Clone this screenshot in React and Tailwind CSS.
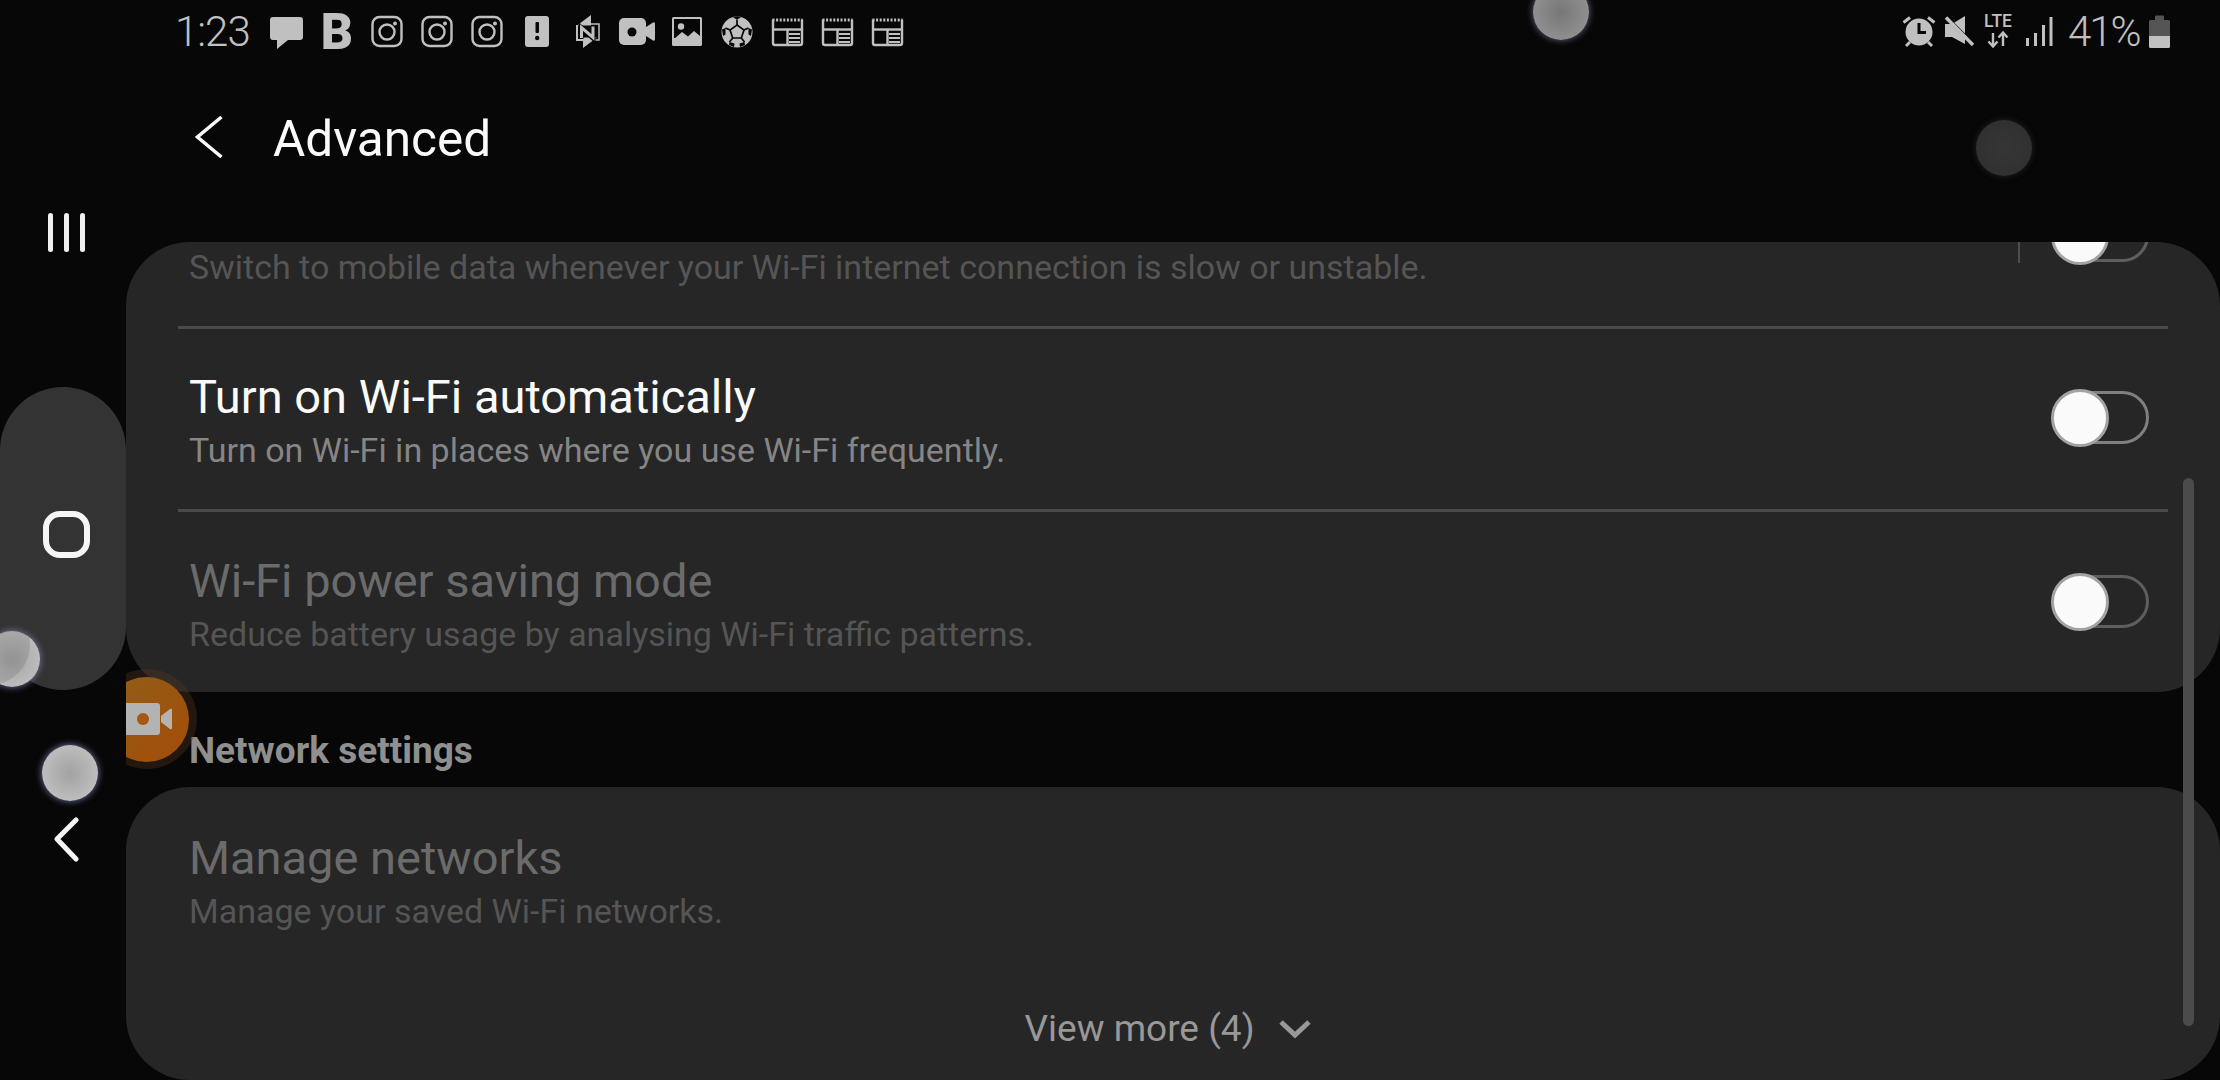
const ICON = "#c0c0c0";
const BG = "#070707";

const Cell = ({ children }) => (
  <svg width="50" height="50" viewBox="0 0 50 50" className="shrink-0">
    {children}
  </svg>
);

const MessageIcon = () => (
  <Cell>
    <path d="M11 10H38a3 3 0 0 1 3 3V30a3 3 0 0 1-3 3H26L15 42V33H11a3 3 0 0 1-3-3V13a3 3 0 0 1 3-3Z" fill={ICON} />
  </Cell>
);

const InstaIcon = () => (
  <Cell>
    <rect x="10.5" y="10" width="29" height="29" rx="7" fill="none" stroke={ICON} strokeWidth="2.4" />
    <circle cx="25" cy="25" r="7.5" fill="none" stroke={ICON} strokeWidth="2.4" />
    <circle cx="33" cy="16.5" r="2" fill={ICON} />
  </Cell>
);

const AlertIcon = () => (
  <Cell>
    <rect x="13" y="9" width="24" height="31" rx="3" fill={ICON} />
    <rect x="23.5" y="15" width="3.5" height="11" rx="1" fill={BG} />
    <circle cx="25.2" cy="31" r="2.2" fill={BG} />
  </Cell>
);

const NetIcon = () => (
  <Cell>
    <path d="M29 17H37V33H30" fill="none" stroke={ICON} strokeWidth="1.5" />
    <path d="M29 8L15 18.5H29Z" fill={ICON} />
    <path d="M21 41L35 30.5H21Z" fill={ICON} />
    <path d="M15 18V33H22" fill="none" stroke={ICON} strokeWidth="2" />
    <path d="M19 32V20.5L31 31V19" fill="none" stroke={BG} strokeWidth="5" />
    <path d="M19.5 31V20.5L31 30.5V19.5" fill="none" stroke={ICON} strokeWidth="3" />
  </Cell>
);

const VideoIcon = () => (
  <Cell>
    <rect x="7" y="11" width="27" height="27" rx="5" fill={ICON} />
    <path d="M34 20L41 15.5Q43 14.5 43 17V32Q43 34.5 41 33.5L34 29Z" fill={ICON} />
    <circle cx="20" cy="25" r="4.5" fill={BG} />
  </Cell>
);

const ImageIcon = () => (
  <Cell>
    <rect x="10" y="10" width="30" height="29" rx="1.5" fill={ICON} />
    <rect x="12" y="12" width="26" height="19" fill={BG} />
    <circle cx="19" cy="19.5" r="3.2" fill={ICON} />
    <path d="M12 32L20 25L26 29.5L32 24L38 29V33H12Z" fill={ICON} />
  </Cell>
);

const BallIcon = () => (
  <Cell>
    <circle cx="25" cy="25" r="15.5" fill={ICON} />
    <path d="M25 18L32 23L29.3 31H20.7L18 23Z" fill="none" stroke={BG} strokeWidth="1.7" />
    <path d="M25 18V12.5M32 23L36.5 21M29.3 31L32.5 35M20.7 31L17.5 35M18 23L13.5 21" stroke={BG} strokeWidth="1.7" />
    <path d="M21 10.4L25 12.5L29 10.4L25 9.2Z" fill={BG} />
    <path d="M36.5 21L40 22.5L39 29L36.5 27.5Z" fill={BG} />
    <path d="M13.5 21L10 22.5L11 29L13.5 27.5Z" fill={BG} />
    <path d="M32.5 35L33 38L28 40L27.5 36.5Z" fill={BG} />
    <path d="M17.5 35L17 38L22 40L22.5 36.5Z" fill={BG} />
  </Cell>
);

const NewsIcon = () => (
  <Cell>
    <path d="M11 12.5V36a2 2 0 0 0 2 2H38a2 2 0 0 0 2-2V12.5" fill="none" stroke={ICON} strokeWidth="2.4" />
    <path d="M10.5 13H40.5" stroke={ICON} strokeWidth="3" strokeDasharray="2 1.6" />
    <path d="M11 22.5H40" stroke={ICON} strokeWidth="2.4" />
    <path d="M25.5 22.5V38" stroke={ICON} strokeWidth="2.4" />
    <path d="M27 27H38M27 31H38M27 35H38" stroke={ICON} strokeWidth="2" />
  </Cell>
);

const AlarmIcon = () => (
  <svg width="34" height="50" viewBox="0 0 34 50" className="shrink-0">
    <circle cx="17" cy="25" r="13.5" fill={ICON} />
    <path d="M17 16V25.5H24" fill="none" stroke={BG} strokeWidth="3" />
    <path d="M1.5 15.5L8 10.5M26 10.5L32.5 15.5M4 39L8 35M30 39L26 35" stroke={ICON} strokeWidth="3" />
  </svg>
);

const MuteIcon = () => (
  <svg width="30" height="50" viewBox="0 0 30 50" className="shrink-0">
    <path d="M1 17H8L21 9V37L8 30H1Z" fill={ICON} />
    <path d="M-1 7L29 37" stroke={BG} strokeWidth="3.5" />
    <path d="M2 10.5L29 38" stroke={ICON} strokeWidth="3.4" />
  </svg>
);

const LteIcon = () => (
  <div className="flex w-[30px] shrink-0 flex-col items-center">
    <span className="text-[17.5px] leading-[13px] font-medium text-[#c0c0c0]">LTE</span>
    <svg width="26" height="19" viewBox="0 0 26 19" className="mt-[2px]">
      <path d="M8 3V16M3.5 11.5L8 16.5L12.5 11.5M18 16V3M13.5 7.5L18 2.5L22.5 7.5" fill="none" stroke={ICON} strokeWidth="2.4" />
    </svg>
  </div>
);

const SignalIcon = () => (
  <svg width="27" height="50" viewBox="0 0 27 50" className="shrink-0">
    <rect x="0" y="31" width="3" height="8" fill={ICON} />
    <rect x="8" y="26" width="3" height="13" fill={ICON} />
    <rect x="16" y="18" width="3" height="21" fill={ICON} />
    <rect x="23.5" y="10" width="3" height="29" fill={ICON} />
  </svg>
);

const BatteryIcon = () => (
  <svg width="21" height="50" viewBox="0 0 21 50" className="shrink-0">
    <path d="M6 13V9.5a1 1 0 0 1 1-1H14a1 1 0 0 1 1 1V13H19.5a1.5 1.5 0 0 1 1.5 1.5V29H0V14.5A1.5 1.5 0 0 1 1.5 13Z" fill="#555555" />
    <path d="M0 29H21V39.5a1.5 1.5 0 0 1-1.5 1.5H1.5A1.5 1.5 0 0 1 0 39.5Z" fill={ICON} />
  </svg>
);

const StatusBar = () => (
  <div className="flex h-[64px] items-center justify-between pr-[50px] pl-[49px]">
    <div className="flex items-center">
      <span className="w-[87px] text-[42px] leading-none font-light tracking-[-1px] text-[#c0c0c0]">1:23</span>
      <MessageIcon />
      <span className="w-[50px] text-center text-[50px] leading-[50px] font-black text-[#c0c0c0]">B</span>
      <InstaIcon />
      <InstaIcon />
      <InstaIcon />
      <AlertIcon />
      <NetIcon />
      <VideoIcon />
      <ImageIcon />
      <BallIcon />
      <NewsIcon />
      <NewsIcon />
      <NewsIcon />
    </div>
    <div className="flex items-center">
      <AlarmIcon />
      <div className="w-[8px]" />
      <MuteIcon />
      <div className="w-[9px]" />
      <LteIcon />
      <div className="w-[13px]" />
      <SignalIcon />
      <div className="w-[15px]" />
      <span className="w-[70px] text-[42px] leading-none font-light tracking-[-2px] text-[#c0c0c0]">41%</span>
      <div className="w-[11px]" />
      <BatteryIcon />
    </div>
  </div>
);

const Toggle = ({ dim }) => (
  <div className={`relative h-[53px] w-[97px] shrink-0 rounded-full border-[3px] ${dim ? "border-[#5e5e5e]" : "border-[#808080]"}`}>
    <div className="absolute top-[-5px] left-[-4px] h-[58px] w-[58px] rounded-full border-[3px] border-[#a3a3a3] bg-[#fafafa]" />
  </div>
);

const Row = ({ title, sub, bright, last }) => (
  <div className={`mx-[52px] flex h-[183px] items-center justify-between pr-[19px] pl-[11px] ${last ? "" : "border-b-[3px] border-[#4a4a4a]"}`}>
    <div className="flex flex-col pt-[1px]">
      <span className={`text-[47px] leading-[60px] ${bright ? "text-[#fafafa]" : "text-[#6b6b6b]"}`}>{title}</span>
      <span className={`text-[34px] leading-[46px] ${bright ? "text-[#858585]" : "text-[#555555]"}`}>{sub}</span>
    </div>
    <div className="mb-[4px]">
      <Toggle dim={!bright} />
    </div>
  </div>
);

const Blob = ({ className, children }) => <div className={`absolute rounded-full ${className}`}>{children}</div>;

export default function App() {
  return (
    <div className="relative flex h-[1080px] w-[2220px] overflow-hidden bg-[#070707] font-['Roboto',sans-serif]">
      <div className="flex w-[126px] shrink-0 flex-col">
        <div className="mt-[213px] ml-[48px] flex h-[39px] gap-[11px]">
          <div className="w-[5px] rounded-full bg-[#f0f0f0]" />
          <div className="w-[5px] rounded-full bg-[#f0f0f0]" />
          <div className="w-[5px] rounded-full bg-[#f0f0f0]" />
        </div>
        <div className="mt-[135px] flex h-[303px] items-center justify-center rounded-full bg-[#333333] pb-[8px] pl-[7px]">
          <div className="h-[47px] w-[47px] rounded-[17px] border-[6px] border-[#f5f5f5]" />
        </div>
        <svg width="30" height="48" viewBox="0 0 30 48" className="mt-[124px] ml-[50px]">
          <path d="M26 6L7 25L26 45" fill="none" stroke="#f5f5f5" strokeWidth="5" strokeLinecap="round" strokeLinejoin="round" />
        </svg>
      </div>

      <div className="flex min-w-0 flex-1 flex-col">
        <StatusBar />
        <div className="flex h-[178px] items-start pt-[52px] pl-[69px]">
          <svg width="28" height="42" viewBox="0 0 28 42">
            <path d="M26.5 1L2.5 21L26.5 41" fill="none" stroke="#fafafa" strokeWidth="3.4" />
          </svg>
          <span className="mt-[-7px] ml-[50px] text-[49.5px] leading-[60px] text-[#fafafa]">Advanced</span>
        </div>

        <div className="h-[450px] overflow-hidden rounded-[64px] bg-[#262626]">
          <div className="mx-[52px] flex h-[87px] items-start justify-between overflow-hidden border-b-[3px] border-[#4a4a4a] pr-[19px] pl-[11px]">
            <span className="mt-[1px] text-[34px] leading-[48px] text-[#555555]">
              Switch to mobile data whenever your Wi-Fi internet connection is slow or unstable.
            </span>
            <div className="flex items-start">
              <div className="mr-[32px] h-[21px] w-[2px] bg-[#4d4d4d]" />
              <div className="mt-[-33px]">
                <Toggle dim />
              </div>
            </div>
          </div>
          <Row bright title="Turn on Wi-Fi automatically" sub="Turn on Wi-Fi in places where you use Wi-Fi frequently." />
          <Row last title="Wi-Fi power saving mode" sub="Reduce battery usage by analysing Wi-Fi traffic patterns." />
        </div>

        <div className="flex h-[95px] items-start pt-[39px] pl-[63px]">
          <span className="text-[37px] leading-[40px] font-bold text-[#8f8f8f]">Network settings</span>
        </div>

        <div className="flex h-[293px] flex-col rounded-[64px] bg-[#262626]">
          <div className="mt-[41px] flex flex-col pl-[63px]">
            <span className="text-[47px] leading-[60px] text-[#6b6b6b]">Manage networks</span>
            <span className="text-[34px] leading-[46px] text-[#555555]">Manage your saved Wi-Fi networks.</span>
          </div>
          <div className="mt-[73px] flex items-center justify-center gap-[23px] pr-[10px]">
            <span className="text-[37px] leading-[44px] text-[#989898]">View more (4)</span>
            <svg width="34" height="22" viewBox="0 0 34 22">
              <path d="M3 4L17 17L31 4" fill="none" stroke="#989898" strokeWidth="5" />
            </svg>
          </div>
        </div>
      </div>

      {/* scrollbar */}
      <div className="absolute top-[478px] left-[2183px] h-[548px] w-[11px] rounded-full bg-[#4b4b4b]" />

      {/* recorder bubble */}
      <div className="absolute top-[669px] left-[126px] h-[100px] w-[71px] overflow-hidden">
        <div className="absolute top-0 left-[-29px] h-[100px] w-[100px] rounded-full bg-[#5a3a20]/35" />
        <div className="absolute top-[8px] left-[-22px] h-[85px] w-[85px] rounded-full bg-[linear-gradient(135deg,#8f5f18,#a54c08)]" />
        <svg width="50" height="36" viewBox="0 0 50 36" className="absolute top-[32px] left-0">
          <path d="M0 2H31a3 3 0 0 1 3 3V31a3 3 0 0 1-3 3H0Z" fill="#b3b3b3" />
          <path d="M35 15L44 8Q46 7 46 9V27Q46 29 44 28L35 21Z" fill="#b3b3b3" />
          <circle cx="17" cy="18" r="6" fill="#a5580f" />
        </svg>
      </div>

      {/* touch blobs */}
      <Blob className="top-[-16px] left-[1533px] h-[56px] w-[56px] bg-[radial-gradient(circle,#777777_0%,#8f8f8f_70%,#a8a8a8_95%)] shadow-[0_0_7px_rgba(120,125,165,0.8)]" />
      <Blob className="top-[120px] left-[1976px] h-[56px] w-[56px] bg-[radial-gradient(circle,#363636_0%,#2f2f2f_90%)] shadow-[0_0_6px_rgba(55,55,55,0.6)]" />
      <Blob className="top-[631px] left-[-16px] h-[56px] w-[56px] overflow-hidden bg-[radial-gradient(circle,#a4a4a4_0%,#bcbcbc_70%,#cfcfcf_95%)] shadow-[0_0_7px_rgba(130,135,185,0.9)]">
        <div className="absolute top-[-26px] left-[-34px] h-[80px] w-[80px] rounded-full bg-black/10" />
      </Blob>
      <Blob className="top-[745px] left-[42px] h-[56px] w-[56px] bg-[radial-gradient(circle,#a2a2a2_0%,#bdbdbd_70%,#d6d6d6_95%)] shadow-[0_0_7px_rgba(130,135,185,0.9)]" />
    </div>
  );
}
